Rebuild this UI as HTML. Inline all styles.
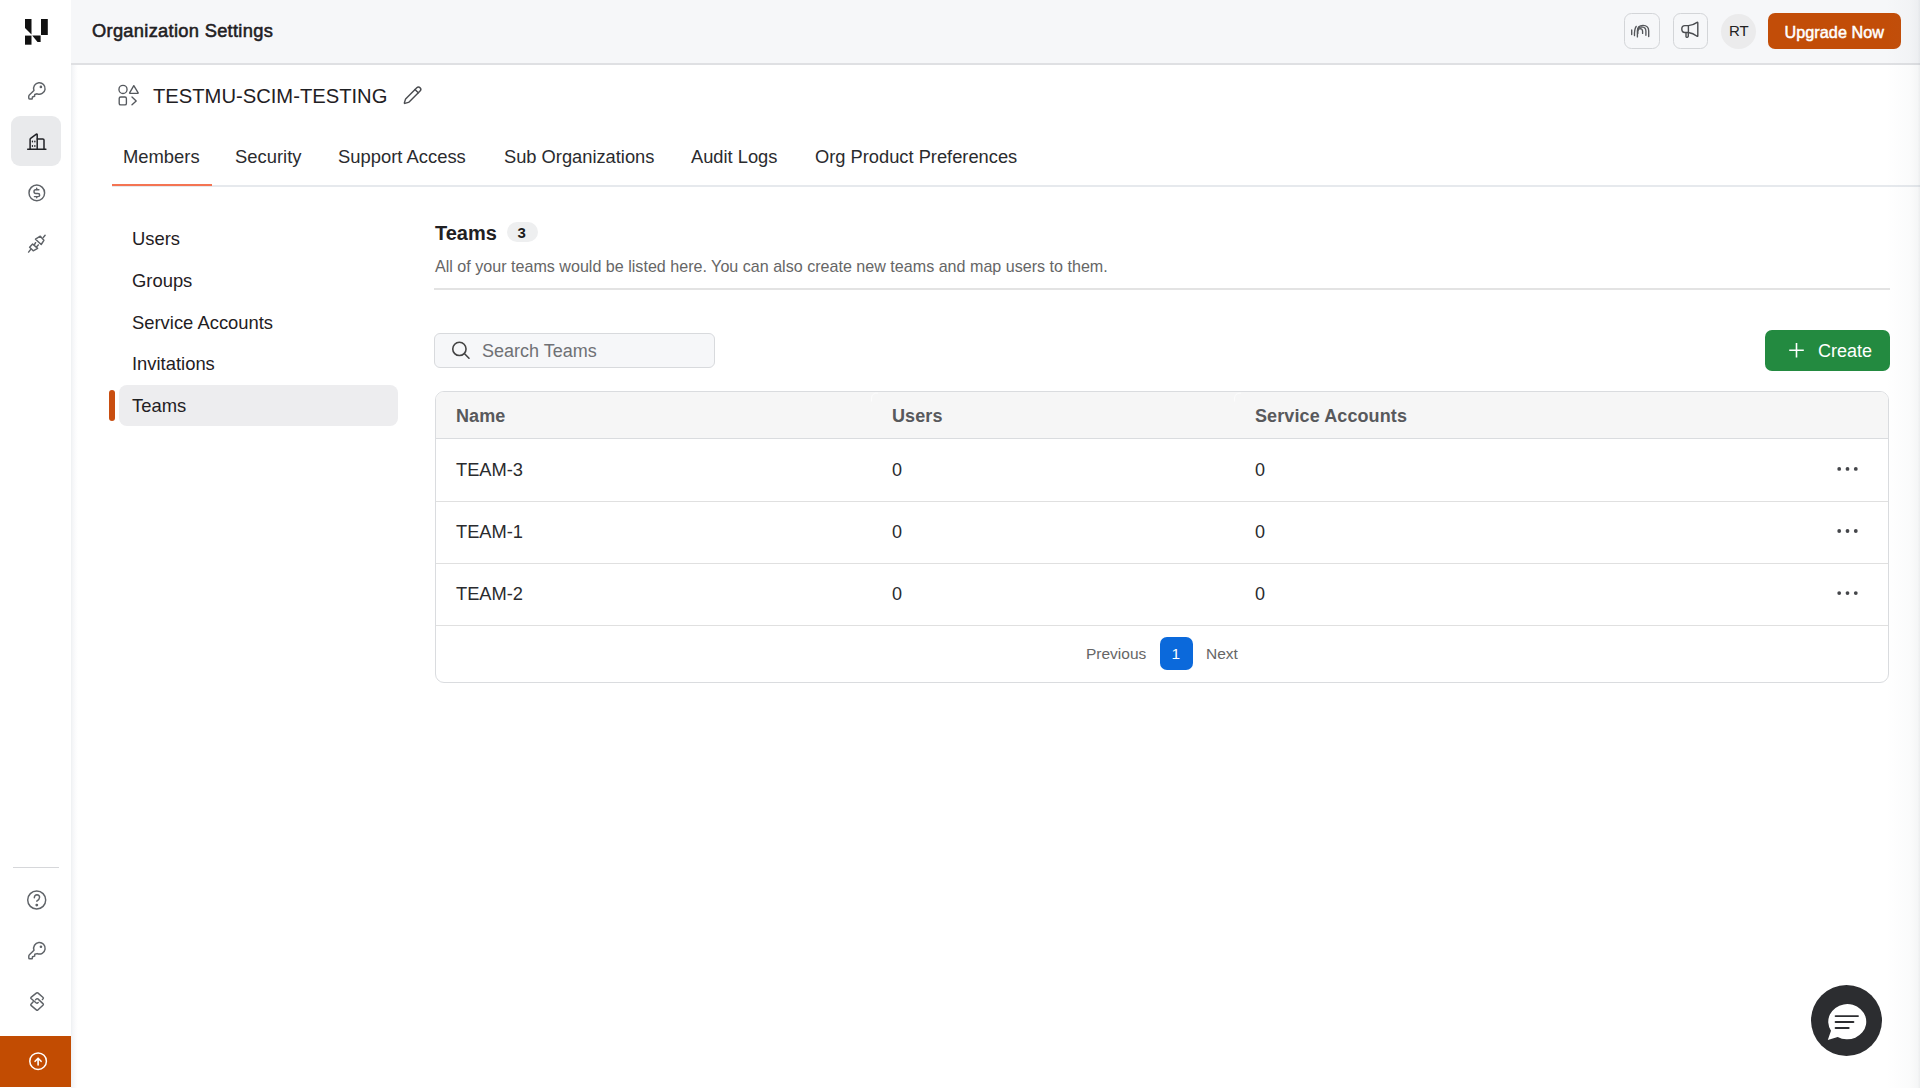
<!DOCTYPE html>
<html>
<head>
<meta charset="utf-8">
<style>
*{box-sizing:border-box;margin:0;padding:0}
html,body{width:1920px;height:1088px;overflow:hidden;background:#fff;font-family:"Liberation Sans",sans-serif;color:#1f2023}
.abs{position:absolute}
.t{position:absolute;white-space:nowrap;line-height:1}
svg.i{position:absolute;left:0;top:0;overflow:visible}
</style>
</head>
<body>
<!-- SIDEBAR -->
<div class="abs" style="left:71px;top:0;width:7px;height:1088px;background:linear-gradient(to right,#eef0f2 0%,#f5f6f8 25%,#fcfcfd 70%,rgba(255,255,255,0) 100%)"></div>
<div class="abs" style="left:10.5px;top:115.5px;width:50px;height:50px;border-radius:9px;background:#e9eaec"></div>
<div class="abs" style="left:12.5px;top:867px;width:46px;height:1.2px;background:#d6d7da"></div>
<div class="abs" style="left:0;top:1036px;width:71px;height:50.5px;background:#c24c02"></div>

<!-- HEADER -->
<div class="abs" style="left:71px;top:0;width:1849px;height:65px;background:#f6f7f9;border-bottom:2px solid #dfe0e3"></div>
<div class="t" style="left:92px;top:21.5px;font-size:18.3px;font-weight:400;letter-spacing:0.3px;-webkit-text-stroke:0.55px #1f2023;color:#1f2023">Organization Settings</div>
<div class="abs" style="left:1624px;top:13px;width:35.5px;height:35.5px;border:1.4px solid #d3d5d8;border-radius:7.5px;background:#f6f7f9"></div>
<div class="abs" style="left:1672.5px;top:13px;width:35.5px;height:35.5px;border:1.4px solid #d3d5d8;border-radius:7.5px;background:#f6f7f9"></div>
<div class="abs" style="left:1721px;top:13.5px;width:35px;height:35px;border-radius:50%;background:#ebebec"></div>
<div class="t" style="left:1729px;top:23px;font-size:15px;color:#222">RT</div>
<div class="abs" style="left:1767.5px;top:13px;width:133.3px;height:35.5px;border-radius:7px;background:#c24d08"></div>
<div class="t" style="left:1784.5px;top:23.5px;font-size:16.2px;font-weight:400;letter-spacing:0.05px;-webkit-text-stroke:0.5px #fff;color:#fff">Upgrade Now</div>

<!-- TITLE -->
<div class="t" style="left:153px;top:86px;font-size:20.2px;color:#1f2023">TESTMU-SCIM-TESTING</div>

<!-- TABS -->
<div class="t" style="left:123px;top:148px;font-size:18.4px;color:#2a2b2e">Members</div>
<div class="t" style="left:235px;top:148px;font-size:18.4px;color:#2a2b2e">Security</div>
<div class="t" style="left:338px;top:148px;font-size:18.4px;color:#2a2b2e">Support Access</div>
<div class="t" style="left:504px;top:148px;font-size:18.3px;color:#2a2b2e">Sub Organizations</div>
<div class="t" style="left:691px;top:148px;font-size:18.3px;color:#2a2b2e">Audit Logs</div>
<div class="t" style="left:815px;top:148px;font-size:18.3px;color:#2a2b2e">Org Product Preferences</div>
<div class="abs" style="left:112px;top:185px;width:1808px;height:2px;background:#e6e9ed"></div>
<div class="abs" style="left:112px;top:183.5px;width:100px;height:2.6px;background:#f47453"></div>

<!-- LEFT NAV -->
<div class="t" style="left:132px;top:229.5px;font-size:18.4px;color:#1f2023">Users</div>
<div class="t" style="left:132px;top:271.5px;font-size:18.4px;color:#1f2023">Groups</div>
<div class="t" style="left:132px;top:313.5px;font-size:18.4px;color:#1f2023">Service Accounts</div>
<div class="t" style="left:132px;top:355px;font-size:18.4px;color:#1f2023">Invitations</div>
<div class="abs" style="left:119px;top:385px;width:278.5px;height:41.3px;border-radius:8px;background:#ededef"></div>
<div class="abs" style="left:109px;top:390px;width:5.5px;height:31px;border-radius:3px;background:#c94e10"></div>
<div class="t" style="left:132px;top:397px;font-size:18.4px;color:#1f2023">Teams</div>

<!-- CONTENT HEADER -->
<div class="t" style="left:435px;top:222.5px;font-size:20px;font-weight:700;color:#1f2023">Teams</div>
<div class="abs" style="left:506.9px;top:222px;width:30.7px;height:20.2px;border-radius:10px;background:#eeeff0"></div>
<div class="t" style="left:517.5px;top:225px;font-size:15px;font-weight:700;color:#1a1a1a">3</div>
<div class="t" style="left:435px;top:258.4px;font-size:16.1px;color:#666">All of your teams would be listed here. You can also create new teams and map users to them.</div>
<div class="abs" style="left:434px;top:288px;width:1456px;height:1.5px;background:#e3e3e3"></div>

<!-- SEARCH -->
<div class="abs" style="left:434px;top:333px;width:281px;height:35px;border:1.2px solid #d8dadd;border-radius:6px;background:#f6f7f9"></div>
<div class="t" style="left:482px;top:342px;font-size:18px;color:#6f7175">Search Teams</div>

<!-- CREATE -->
<div class="abs" style="left:1765px;top:330px;width:124.5px;height:40.5px;border-radius:7px;background:#238a40"></div>
<div class="t" style="left:1818px;top:342px;font-size:18px;color:#fff">Create</div>

<!-- TABLE -->
<div class="abs" style="left:434.5px;top:391px;width:1454.5px;height:292px;border:1.2px solid #dadcdf;border-radius:9px;overflow:hidden">
  <div class="abs" style="left:0;top:0;width:1454px;height:46.8px;background:#f6f6f6;border-bottom:1.2px solid #dadcdf"></div>
  <div class="abs" style="left:0;top:108.6px;width:1454px;height:1.2px;background:#e0e0e0"></div>
  <div class="abs" style="left:0;top:170.6px;width:1454px;height:1.2px;background:#e0e0e0"></div>
  <div class="abs" style="left:0;top:232.8px;width:1454px;height:1.2px;background:#e0e0e0"></div>
</div>
<div class="t" style="left:456px;top:407px;font-size:18px;font-weight:700;letter-spacing:0.1px;color:#58595c">Name</div>
<div class="t" style="left:892px;top:407px;font-size:18px;font-weight:700;letter-spacing:0.1px;color:#58595c">Users</div>
<div class="t" style="left:1255px;top:407px;font-size:18px;font-weight:700;letter-spacing:0.1px;color:#58595c">Service Accounts</div>

<div class="t" style="left:456px;top:461px;font-size:18.3px;color:#2a2b2e">TEAM-3</div>
<div class="t" style="left:892px;top:461px;font-size:18px;color:#2a2b2e">0</div>
<div class="t" style="left:1255px;top:461px;font-size:18px;color:#2a2b2e">0</div>
<div class="t" style="left:456px;top:523px;font-size:18.3px;color:#2a2b2e">TEAM-1</div>
<div class="t" style="left:892px;top:523px;font-size:18px;color:#2a2b2e">0</div>
<div class="t" style="left:1255px;top:523px;font-size:18px;color:#2a2b2e">0</div>
<div class="t" style="left:456px;top:585px;font-size:18.3px;color:#2a2b2e">TEAM-2</div>
<div class="t" style="left:892px;top:585px;font-size:18px;color:#2a2b2e">0</div>
<div class="t" style="left:1255px;top:585px;font-size:18px;color:#2a2b2e">0</div>

<!-- PAGINATION -->
<div class="t" style="left:1086px;top:645.5px;font-size:15.5px;color:#666">Previous</div>
<div class="abs" style="left:1159.5px;top:636.8px;width:33px;height:33px;border-radius:7px;background:#0b69db"></div>
<div class="t" style="left:1171.5px;top:645.5px;font-size:15.5px;color:#fff">1</div>
<div class="t" style="left:1206px;top:645.5px;font-size:15.5px;color:#666">Next</div>

<!-- CHAT -->
<div class="abs" style="left:1811px;top:985px;width:71px;height:71px;border-radius:50%;background:#2c2d30"></div>

<!-- ICONS (all in one full-page svg) -->
<svg class="i" width="1920" height="1088" viewBox="0 0 1920 1088">
  <!-- logo -->
  <g fill="#111">
    <polygon points="25,19 31.5,19 31.5,34.5 25,28"/>
    <polygon points="41,19 47.8,19 47.8,35 41,35"/>
    <polygon points="25,35.6 31.5,35.6 31.5,44.7 25,44.7"/>
    <polygon points="32.2,35.6 40.6,35.6 40.6,41.9 37.5,41.9"/>
  </g>
  <g fill="none" stroke="#5f6368" stroke-width="1.45" stroke-linecap="round" stroke-linejoin="round">
    <!-- key top -->
    <path d="M33.95,90.47 L29.35,94.90 Q28.75,95.50 28.75,96.30 L28.75,98.10 Q28.75,98.90 29.55,98.90 L32.15,98.90 L32.45,97.00 L34.55,96.30 L34.75,94.50 L37.15,93.80 A5.75,5.75 0 1 0 33.95,90.47 Z"/>
    <circle cx="40.90" cy="86.90" r="0.6" fill="#5f6368"/>
    <!-- dollar -->
    <circle cx="36.8" cy="192.9" r="7.8"/>
    <path d="M38.9,189.7 H35.6 Q34,189.7 34,191.6 Q34,193.5 35.8,193.5 H37.9 Q39.7,193.5 39.7,195.2 Q39.7,196.6 37.9,196.6 H34.4"/>
    <path d="M36.7,188.2 V189.6 M36.7,196.7 V197.8"/>
    <!-- plug -->
    <path d="M35.5,239.2 L40.3,236.2 L43.9,240.3 L41.2,244.5 Z"/>
    <path d="M43.2,237.6 L45.1,235.2"/>
    <path d="M29.6,247.2 L32.6,244 L37.6,248.4 L33.2,250.8 Z"/>
    <path d="M34.2,245 L35.6,242.7 M36.6,246.8 L38.3,244.9 M30.7,249.4 L28.6,252.1"/>
    <!-- help -->
    <circle cx="36.7" cy="900" r="9"/>
    <path d="M34.3,897.8 Q34.6,894.7 36.9,894.7 Q39.6,894.9 39.6,897.2 Q39.5,899.3 36.8,901.2"/>
    <circle cx="36.8" cy="905.1" r="0.7" fill="#5f6368"/>
    <!-- key bottom -->
    <path d="M34.00,950.27 L29.40,954.70 Q28.80,955.30 28.80,956.10 L28.80,957.90 Q28.80,958.70 29.60,958.70 L32.20,958.70 L32.50,956.80 L34.60,956.10 L34.80,954.30 L37.20,953.60 A5.75,5.75 0 1 0 34.00,950.27 Z"/>
    <circle cx="40.95" cy="946.70" r="0.6" fill="#5f6368"/>
    <!-- stack diamonds -->
    <path d="M42.4,999.6 L43.3,998.4 Q43.6,997.9 43.1,997.5 L37.8,992.9 Q37.2,992.5 36.6,992.9 L31,997.4 Q30.5,997.9 31,998.5 L36.3,1003 Q37.2,1003.6 38.2,1002.6"/>
    <path d="M35.6,999.7 L36.7,998.8 Q37.3,998.4 37.9,998.9 L43.2,1003.9 Q43.6,1004.4 43.2,1004.9 L37.8,1010.1 Q37.2,1010.5 36.6,1010.1 L31,1005.4 Q30.5,1004.9 31,1004.3 L33.2,1001.7"/>
    <!-- shapes icon -->
    <circle cx="123" cy="89.4" r="4.05" stroke="#55595e" stroke-width="1.35"/>
    <path d="M133.8,85.6 L138.2,92.9 Q138.4,93.4 137.9,93.4 L129.9,93.4 Q129.4,93.4 129.6,92.9 Z" stroke="#55595e" stroke-width="1.35"/>
    <rect x="119.2" y="97" width="7.2" height="7.9" rx="1.5" stroke="#55595e" stroke-width="1.35"/>
    <path d="M132,97 L136.2,101 L132,104.8" stroke="#55595e" stroke-width="1.35"/>
    <!-- pencil (lucide) -->
    <g transform="translate(402.7,85.4) scale(0.82)" stroke="#4a4c50" stroke-width="1.75">
      <path d="M21.174 6.812a1 1 0 0 0-3.986-3.987L3.842 16.174a2 2 0 0 0-.5.83l-1.321 4.352a.5.5 0 0 0 .623.622l4.353-1.32a2 2 0 0 0 .83-.497z"/>
      <path d="m15 5 4 4"/>
    </g>
    <!-- header icon 1 -->
    <g stroke="#55575b" stroke-width="1.35">
      <path d="M1631.7,30 V34.5"/>
      <path d="M1634.5,35.6 Q1634.2,29.5 1636.2,26.4"/>
      <path d="M1637.4,36.9 V31 Q1637.4,25.4 1643,25.4 Q1648.7,25.5 1648.7,31 V36.6"/>
      <path d="M1637.6,30.6 Q1638.2,27 1641.8,26.9 Q1645.8,27.1 1645.9,31 V35.3"/>
      <path d="M1637.8,33.5 V31.5 Q1638.2,28.7 1640.2,28.6 Q1642.5,28.8 1642.6,31.3 V33.4"/>
    </g>
    <!-- megaphone -->
    <g stroke="#4a4c50" stroke-width="1.4">
      <path d="M1688.4,25.6 Q1693,25.4 1697.1,22.4 Q1697.8,22.1 1697.8,22.9 V35.8 Q1697.8,36.6 1697.1,36.3 Q1693,33.2 1688.4,32.5 H1684.9 Q1681.8,32.5 1681.8,29 Q1681.8,25.6 1684.9,25.6 Z"/>
      <path d="M1688.4,25.6 V32.5"/>
      <path d="M1686,32.7 V36.6 Q1686.2,37.5 1687.3,37.3 Q1688.3,37.1 1688.3,36.3 V32.7"/>
    </g>
    <!-- search -->
    <circle cx="459.4" cy="348.9" r="6.65" stroke="#444" stroke-width="1.6"/>
    <path d="M464.6,353.8 L469,358.2" stroke="#444" stroke-width="1.6"/>
    <!-- create plus -->
    <path d="M1796.5,343 V357.6 M1789.2,350.3 H1803.8" stroke="#fff" stroke-width="1.6" stroke-linecap="butt"/>
    <!-- up arrow bottom -->
    <circle cx="38.1" cy="1061.2" r="8.3" stroke="#fff" stroke-width="1.5"/>
    <path d="M38.1,1065 V1058.3 M35.1,1061.3 L38.1,1058.2 L41.1,1061.3" stroke="#fff" stroke-width="1.6"/>
  </g>
  <!-- building (active, dark) -->
  <g fill="none" stroke="#222327" stroke-width="1.5" stroke-linecap="round" stroke-linejoin="round">
    <path d="M27.7,149.2 H45.9"/>
    <path d="M30.1,149 V139.3 Q30.1,138.7 30.6,138.4 L36.4,134.1 Q37.2,133.7 37.2,134.6 V149"/>
    <path d="M37.3,138.9 H42.8 Q44,138.9 44,140.1 V149"/>
  </g>
  <g fill="#222327">
    <rect x="31.8" y="140.5" width="1.3" height="1.9" rx="0.6"/>
    <rect x="34.2" y="140.5" width="1.3" height="1.9" rx="0.6"/>
    <rect x="31.8" y="145" width="1.3" height="1.9" rx="0.6"/>
    <rect x="34.2" y="145" width="1.3" height="1.9" rx="0.6"/>
  </g>
  <!-- header col resize artifacts -->
  <g fill="none" stroke="#fdfdfd" stroke-width="1" opacity="0.9">
    <path d="M871.5,401.5 V398 Q871.5,393.2 878,393"/>
    <path d="M1234.6,401.5 V398 Q1234.6,393.2 1241,393"/>
  </g>
  <!-- ellipsis -->
  <g fill="#44464a">
    <circle cx="1839.2" cy="468.9" r="1.9"/><circle cx="1847.5" cy="468.9" r="1.9"/><circle cx="1855.8" cy="468.9" r="1.9"/>
    <circle cx="1839.2" cy="531" r="1.9"/><circle cx="1847.5" cy="531" r="1.9"/><circle cx="1855.8" cy="531" r="1.9"/>
    <circle cx="1839.2" cy="593.1" r="1.9"/><circle cx="1847.5" cy="593.1" r="1.9"/><circle cx="1855.8" cy="593.1" r="1.9"/>
  </g>
  <!-- chat bubble -->
  <path d="M1831,1030.8 A19,17.6 0 1 1 1837.7,1036.9 L1827.8,1040.1 Z" fill="#fff"/>
  <g stroke="#2c2d30" stroke-width="1.9" stroke-linecap="round">
    <path d="M1835.6,1016.1 H1858"/>
    <path d="M1835.6,1022 H1853.4"/>
    <path d="M1835.6,1028 H1848.7"/>
  </g>
</svg>
<div class="abs" style="left:1886px;top:0;width:34px;height:1088px;background:linear-gradient(to right,rgba(120,130,140,0) 0%,rgba(120,130,140,0.03) 70%,rgba(120,130,140,0.07) 93%,rgba(120,130,140,0.14) 100%)"></div>
</body>
</html>
